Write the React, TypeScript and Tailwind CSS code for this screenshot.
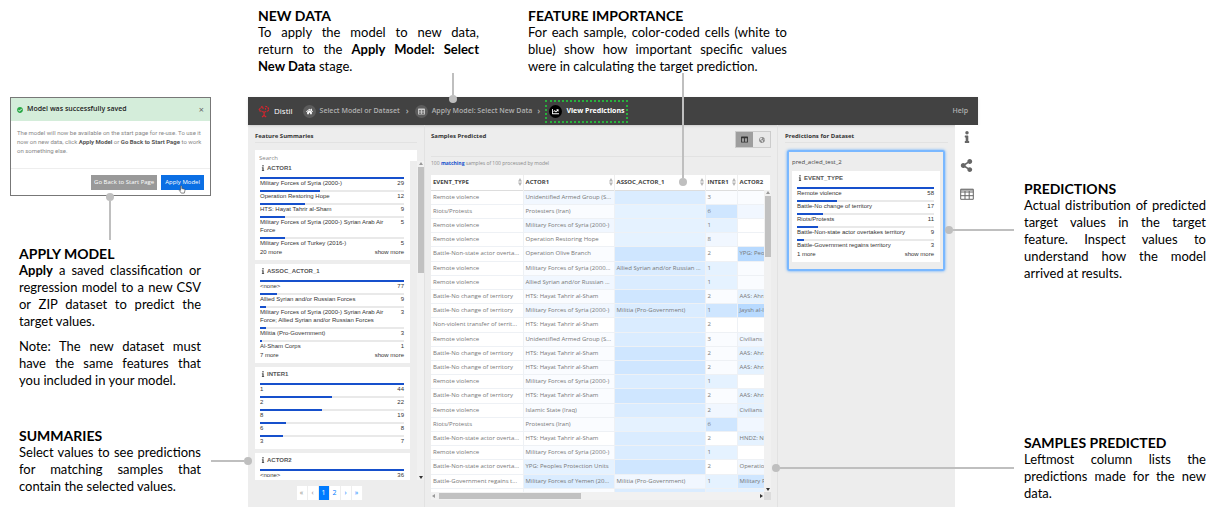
import React from 'react';
import { FaCheckCircle, FaChartLine, FaColumns, FaGlobeAmericas, FaHome, FaInfo, FaShareAlt, FaTable } from 'react-icons/fa';

type Item = [label: string, count: number];

const actor1: Item[] = [
  ['Military Forces of Syria (2000-)', 29],
  ['Operation Restoring Hope', 12],
  ['HTS: Hayat Tahrir al-Sham', 9],
  ['Military Forces of Syria (2000-) Syrian Arab Air Force', 5],
  ['Military Forces of Turkey (2016-)', 5],
];
const assocActor1: Item[] = [
  ['<none>', 77],
  ['Allied Syrian and/or Russian Forces', 9],
  ['Military Forces of Syria (2000-) Syrian Arab Air Force; Allied Syrian and/or Russian Forces', 3],
  ['Militia (Pro-Government)', 3],
  ['Al-Sham Corps', 1],
];
const inter1: Item[] = [['1', 44], ['2', 22], ['8', 19], ['6', 8], ['3', 7]];
const actor2: Item[] = [['<none>', 36]];
const eventType: Item[] = [
  ['Remote violence', 58],
  ['Battle-No change of territory', 17],
  ['Riots/Protests', 11],
  ['Battle-Non-state actor overtakes territory', 9],
  ['Battle-Government regains territory', 3],
];

const W = 'bg-white';
const A = 'bg-[#fafcff]';
const B = 'bg-[#f1f7ff]';
const C = 'bg-[#e5f2ff]';
const D = 'bg-[#daecff]';
const E = 'bg-[#cfe6ff]';
const F = 'bg-[#b8daff]';

type Row = { t: string[]; c: string[] };
const RV = 'Remote violence';
const BN = 'Battle-No change of territory';
const BS = 'Battle-Non-state actor overta...';
const HTS = 'HTS: Hayat Tahrir al-Sham';
const MS = 'Military Forces of Syria (2000-)';
const UAG = 'Unidentified Armed Group (S...';
const rows: Row[] = [
  { t: [RV, UAG, '', '3', ''], c: [B, D, A, A] },
  { t: ['Riots/Protests', 'Protesters (Iran)', '', '6', ''], c: [A, C, E, B] },
  { t: [RV, MS, '', '1', ''], c: [B, C, C, W] },
  { t: [RV, 'Operation Restoring Hope', '', '8', ''], c: [W, C, B, W] },
  { t: [BS, 'Operation Olive Branch', '', '2', 'YPG: Peoples'], c: [A, E, W, F] },
  { t: [RV, 'Military Forces of Syria (2000...', 'Allied Syrian and/or Russian ...', '1', ''], c: [A, D, C, A] },
  { t: [RV, 'Allied Syrian and/or Russian ...', '', '1', ''], c: [B, D, C, A] },
  { t: [BN, HTS, '', '2', 'AAS: Ahrar'], c: [A, E, A, C] },
  { t: [BN, MS, 'Militia (Pro-Government)', '1', 'Jaysh al-Islam'], c: [B, D, E, F] },
  { t: ['Non-violent transfer of territ...', HTS, '', '2', ''], c: [W, D, W, W] },
  { t: [RV, UAG, '', '3', 'Civilians'], c: [A, D, A, B] },
  { t: [BN, HTS, '', '2', 'AAS: Ahrar'], c: [A, E, A, C] },
  { t: [BN, HTS, '', '2', 'AAS: Ahrar'], c: [A, E, A, C] },
  { t: [RV, MS, '', '1', ''], c: [A, D, C, W] },
  { t: [BN, HTS, '', '2', 'AAS: Ahrar'], c: [A, E, A, C] },
  { t: [RV, 'Islamic State (Iraq)', '', '2', 'Civilians'], c: [A, D, B, C] },
  { t: ['Riots/Protests', 'Protesters (Iran)', '', '6', ''], c: [A, C, E, B] },
  { t: [BS, HTS, '', '2', 'HNDZ: National'], c: [W, D, W, C] },
  { t: [RV, MS, '', '1', ''], c: [A, D, C, W] },
  { t: [BS, 'YPG: Peoples Protection Units', '', '2', 'Operation'], c: [C, E, W, B] },
  { t: ['Battle-Government regains t...', 'Military Forces of Yemen (20...', 'Militia (Pro-Government)', '1', 'Military Forces'], c: [D, B, C, E] },
  { t: ['', '', '', '', ''], c: [A, D, C, C] },
];

function Summary({ title, items, more }: { title: string; items: Item[]; more?: string }) {
  const max = items[0][1];
  return (
    <section className="shrink-0 bg-white pr-[6px] pb-1 pl-[5px] font-['Liberation_Sans',sans-serif] text-[6px] leading-[8px] text-[#333]">
      <h3 className="flex h-4 items-center gap-px pb-0.5 font-bold text-[#555]">
        <FaInfo className="size-[6px]" />
        {title}
      </h3>
      <ul className="flex flex-col gap-[3px]">
        {items.map(([label, count]) => (
          <li key={label}>
            <div className="h-0.5 bg-[#e9e9e9]">
              <div className="h-full bg-[#1650cc]" style={{ width: `${(count / max) * 100}%` }} />
            </div>
            <div className="flex justify-between">
              <span className="max-w-[128px]">{label}</span>
              <span>{count}</span>
            </div>
          </li>
        ))}
      </ul>
      {more && (
        <div className="mt-px flex justify-between">
          <span>{more}</span>
          <button type="button">show more</button>
        </div>
      )}
    </section>
  );
}

function Note({ title, children, className = '' }: { title: string; children: React.ReactNode; className?: string }) {
  return (
    <section className={`text-justify font-[Lato,sans-serif] text-[13px] leading-[17px] text-black ${className}`}>
      <h2 className="text-[14px] font-bold">{title}</h2>
      {children}
    </section>
  );
}

function Logo() {
  return (
    <svg viewBox="0 0 12 13" className="h-[13px] w-3 fill-none stroke-[#e0222c]">
      <path d="M4.4 1.2 2.8 2.6M2.4 3.2.8 5M1.2 5.6l2.4.6M4.6 2l.6 1.8M7.4 1.4l1.8.4M9.8 2.2l1 2.2M10.8 5.2 9 6.4M7.4 3.2l.2 1.4M4.2 6.4l1.8.8 2.2-.8M6.1 7.4v2.8M4 12l2-1.6L8.2 12" strokeWidth="1.1" />
    </svg>
  );
}

function Arrow({ d }: { d: 'up' | 'down' | 'left' | 'right' }) {
  const paths = { up: 'M3 1 5 4H1z', down: 'M3 5 5 2H1z', left: 'M1 3 4 1v4z', right: 'M5 3 2 1v4z' };
  return (
    <svg viewBox="0 0 6 6" className={`size-[6px] shrink-0 ${d === 'up' || d === 'left' ? 'fill-[#999]' : 'fill-[#333]'}`}>
      <path d={paths[d]} />
    </svg>
  );
}

function SortIcon() {
  return (
    <svg viewBox="0 0 6 8" className="h-2 w-[6px] shrink-0 fill-[#b5b5b5]">
      <path d="M3 0 5 3.4H1zM3 8 1 4.6h4z" />
    </svg>
  );
}

function Dialog() {
  return (
    <div role="dialog" aria-labelledby="saved" className="relative mx-[10px] mt-[97px] w-[201px] border border-[#777] bg-white font-['Open_Sans',sans-serif] text-[6px]">
      <div className="flex h-[23px] items-center bg-[#d4edda] px-[6px] text-[#222]">
        <FaCheckCircle className="size-[6px] text-[#28a745]" />
        <h2 id="saved" className="ml-1 flex-1 text-[7px] font-semibold">Model was successfully saved</h2>
        <button type="button" aria-label="Close" className="text-[9px] text-[#666]">×</button>
      </div>
      <p className="h-[47px] px-[6px] pt-[7px] font-[Roboto,sans-serif] leading-[9px] text-[#888]">
        The model will now be available on the start page for re-use. To use it now on new data, click <b className="font-bold text-[#555]">Apply Model</b> or <b className="font-bold text-[#555]">Go Back to Start Page</b> to work on something else.
      </p>
      <div className="flex h-[27px] items-center justify-end gap-1 border-t border-[#eee] px-[6px] text-white">
        <button type="button" className="h-[15px] bg-[#999] px-[3px]">Go Back to Start Page</button>
        <button type="button" className="h-[15px] bg-[#0b6fe4] px-1">Apply Model</button>
      </div>
      <svg viewBox="0 0 8 10" className="absolute right-6 bottom-px h-[9px] w-2 fill-white stroke-[#444]" strokeWidth=".7">
        <path d="M2.5 5V1.2Q3.2.3 3.8 1.2V4L6.8 4.6Q7.5 5 7.2 6.5L6.5 9H3.2L1 6Q1 5 2.5 6Z" />
      </svg>
      <div className="absolute top-[95px] left-[95px] flex flex-col items-center">
        <i className="size-2 rounded-full bg-[#bfbfbf]" />
        <i className="h-[39px] w-0.5 bg-[#bfbfbf]" />
      </div>
    </div>
  );
}

function Header() {
  return (
    <header className="flex h-7 items-center bg-[#424242] px-[10px] text-[7px] font-semibold text-[#b0b0b0] shadow-sm">
      <Logo />
      <h1 className="ml-1 text-[8px] font-normal text-white">Distil</h1>
      <nav className="ml-[10px] flex flex-1 items-center">
        <a href="#start" className="flex items-center gap-1">
          <span className="flex size-[13px] items-center justify-center rounded-full bg-[#5c5c5c] text-white"><FaHome className="size-[7px]" /></span>
          Select Model or Dataset
        </a>
        <span className="mx-[6px] text-[9px]">›</span>
        <a href="#data" className="flex items-center gap-1">
          <span className="flex size-[13px] items-center justify-center rounded-full bg-[#5c5c5c] text-[#ccc]"><FaTable className="size-[7px]" /></span>
          Apply Model: Select New Data
        </a>
        <span className="mx-[5px] text-[9px]">›</span>
        <a href="#predictions" className="flex h-[23px] items-center gap-1 border-2 border-dotted border-[#28b23c] px-0.5 font-bold text-white">
          <span className="flex size-[13px] items-center justify-center rounded-full bg-black"><FaChartLine className="size-[7px]" /></span>
          View Predictions
        </a>
      </nav>
      <a href="#help">Help</a>
    </header>
  );
}

function FeatureColumn() {
  return (
    <section className="flex w-[177px] flex-col border-r border-[#e2e2e2] pl-[7px]">
      <h2 className="mr-[7px] h-[18px] border-b border-[#e2e2e2] pt-[6px] font-bold text-[#333]">Feature Summaries</h2>
      <input aria-label="Search features" placeholder="Search" className="mt-[7px] mr-[7px] h-[11px] bg-white px-1 pt-1 text-[6px] placeholder:text-[#888]" />
      <div className="flex h-[319px]">
        <div className="flex flex-1 flex-col gap-1 overflow-hidden">
          <Summary title="ACTOR1" items={actor1} more="20 more" />
          <Summary title="ASSOC_ACTOR_1" items={assocActor1} more="7 more" />
          <Summary title="INTER1" items={inter1} />
          <Summary title="ACTOR2" items={actor2} />
        </div>
        <div className="ml-[7px] flex w-[7px] flex-col items-center justify-between bg-[#f1f1f1]">
          <Arrow d="up" />
          <div className="mb-auto h-[106px] w-[6px] bg-[#c1c1c1]" />
          <Arrow d="down" />
        </div>
      </div>
      <nav aria-label="Pages" className="mt-[6px] mr-[20px] flex justify-center text-[7px]">
        {['«', '‹', '1', '2', '›', '»'].map((p, i) => (
          <button
            key={p}
            type="button"
            className={`h-[14px] w-[11px] border-r border-[#eee] ${p === '1' ? 'bg-[#007bff] text-white' : i < 2 ? 'bg-white text-[#888]' : 'bg-white text-[#007bff]'}`}
          >
            {p}
          </button>
        ))}
      </nav>
    </section>
  );
}

function Samples() {
  const heads = ['EVENT_TYPE', 'ACTOR1', 'ASSOC_ACTOR_1', 'INTER1', 'ACTOR2'];
  return (
    <section className="flex min-w-0 flex-1 flex-col border-r border-[#e2e2e2] px-[6px]">
      <div className="flex h-8 items-start justify-between border-b border-[#e2e2e2] pt-[6px]">
        <h2 className="font-bold text-[#333]">Samples Predicted</h2>
        <div className="flex border border-[#ccc]">
          <button type="button" aria-label="Table view" className="flex h-[15px] w-[17px] items-center justify-center bg-[#9e9e9e] text-[#333]"><FaColumns className="size-[7px]" /></button>
          <button type="button" aria-label="Map view" className="flex h-[15px] w-[17px] items-center justify-center bg-[#e8e8e8] text-[#888]"><FaGlobeAmericas className="size-[6px]" /></button>
        </div>
      </div>
      <p className="h-[18px] text-[5px] leading-[12px] text-[#888]">
        100 <b className="text-[#1650cc]">matching</b> samples of 100 processed by model
      </p>
      <div className="relative h-[317px] overflow-hidden bg-white">
        <table className="h-[328px] w-full table-fixed border-collapse text-left leading-[9px] text-[#777]">
          <colgroup>
            <col className="w-[92px]" />
            <col className="w-[91px]" />
            <col className="w-[91px]" />
            <col className="w-8" />
            <col />
          </colgroup>
          <thead>
            <tr className="h-[15px] border-b border-[#ddd] text-[#444]">
              {heads.map((h, i) => (
                <th key={h} scope="col" className="overflow-hidden border-r border-[#eee] pl-0.5 font-bold">
                  <div className="flex items-center justify-between">
                    {h}
                    {i < 4 && <SortIcon />}
                  </div>
                </th>
              ))}
            </tr>
          </thead>
          <tbody>
            {rows.map((r, i) => (
              <tr key={i} className="h-[14px] border-b border-[#eef1f5]">
                {r.t.map((t, j) => (
                  <td key={j} className={`overflow-hidden border-r border-[#eef1f5] py-0 pr-0 pl-0.5 whitespace-nowrap ${j ? r.c[j - 1] : W}`}>{t}</td>
                ))}
              </tr>
            ))}
          </tbody>
        </table>
        <div className="absolute top-[15px] right-0 bottom-0 flex w-[7px] flex-col items-center bg-[#f1f1f1]">
          <Arrow d="up" />
          <div className="mb-auto h-[61px] w-[6px] bg-[#c1c1c1]" />
          <Arrow d="down" />
        </div>
      </div>
      <div className="flex h-2 items-center bg-[#f1f1f1]">
        <Arrow d="left" />
        <div className="mr-auto ml-[2px] h-[6px] w-[142px] bg-[#c1c1c1]" />
        <Arrow d="right" />
        <div className="h-full w-[7px] bg-[#dcdcdc]" />
      </div>
    </section>
  );
}

function Predictions() {
  return (
    <section className="w-[177px] px-[7px]">
      <h2 className="h-[18px] border-b border-[#e2e2e2] pt-[6px] font-bold text-[#333]">Predictions for Dataset</h2>
      <div className="mt-[7px] mr-[3px] ml-[2px] h-[121px] rounded-xs border-2 border-[#7ab8ff] px-[3px] shadow-[0_0_3px_#5aa8ff]">
        <h3 className="h-[19px] pt-[5px] text-[#444]">pred_acled_test_2</h3>
        <Summary title="EVENT_TYPE" items={eventType} more="1 more" />
      </div>
    </section>
  );
}

export default function App() {
  return (
    <main className="flex min-h-screen bg-white">
      <aside className="w-[248px] shrink-0">
        <Dialog />
        <Note title="APPLY MODEL" className="mt-[49px] mr-[47px] ml-[19px]">
          <p><b>Apply</b> a saved classification or regression model to a new CSV or ZIP dataset to predict the target values.</p>
          <p className="mt-2">Note: The new dataset must have the same features that you included in your model.</p>
        </Note>
        <div className="relative mt-[38px]">
          <Note title="SUMMARIES" className="mr-[47px] ml-[19px]">
            <p>Select values to see predictions for matching samples that contain the selected values.</p>
          </Note>
          <div className="absolute top-[30px] -right-1 z-10 flex items-center">
            <i className="h-0.5 w-[33px] bg-[#bfbfbf]" />
            <i className="size-2 rounded-full bg-[#bfbfbf]" />
          </div>
        </div>
      </aside>

      <div className="relative min-w-0 flex-1">
        <div className="flex h-[97px] gap-[49px] pt-[7px] pl-[10px]">
          <Note title="NEW DATA" className="w-[221px]">
            <p>To apply the model to new data, return&nbsp;to the <b>Apply Model: Select New&nbsp;Data</b>&nbsp;stage.</p>
          </Note>
          <Note title="FEATURE IMPORTANCE" className="w-[259px]">
            <p>For each sample, color-coded cells (white to blue) show how important specific values were in calculating the target prediction.</p>
          </Note>
        </div>
        <div className="h-[410px] bg-[#ededed] font-['Open_Sans',sans-serif] text-[6px] leading-[10px]">
          <Header />
          <div className="flex h-[382px]">
            <FeatureColumn />
            <Samples />
            <Predictions />
            <div className="flex w-[23px] flex-col items-center gap-4 bg-white pt-[6px] text-[#666]">
              <button type="button" aria-label="Details"><FaInfo className="size-3" /></button>
              <button type="button" aria-label="Share"><FaShareAlt className="size-[13px]" /></button>
              <button type="button" aria-label="Table">
                <svg viewBox="0 0 14 12" className="h-3 w-[14px] fill-none stroke-current">
                  <path d="M.7 1.2h12.6v10.1H.7zM.7 4h12.6M.7 7.7h12.6M5 3v8M9.2 3v8M1 2h12" />
                </svg>
              </button>
            </div>
          </div>
        </div>
        <div className="absolute top-[73px] left-[201px] flex flex-col items-center">
          <i className="h-[22px] w-0.5 bg-[#bfbfbf]" />
          <i className="size-2 rounded-full bg-[#bfbfbf]" />
        </div>
        <div className="absolute top-[73px] left-[431px] flex flex-col items-center">
          <i className="h-[105px] w-0.5 bg-[#bfbfbf]" />
          <i className="size-2 rounded-full bg-[#bfbfbf]" />
        </div>
        <div className="absolute top-[226px] -right-9 flex items-center">
          <i className="size-2 rounded-full bg-[#bfbfbf]" />
          <i className="h-0.5 w-[61px] bg-[#bfbfbf]" />
        </div>
        <div className="absolute top-[464px] -right-9 flex items-center">
          <i className="size-2 rounded-full bg-[#bfbfbf]" />
          <i className="h-0.5 w-[234px] bg-[#bfbfbf]" />
        </div>
      </div>

      <aside className="w-[239px] shrink-0 pt-[180px] pr-[11px] pl-[46px]">
        <Note title="PREDICTIONS">
          <p>Actual distribution of predicted target values in the target feature. Inspect values to understand how the model arrived at results.</p>
        </Note>
        <Note title="SAMPLES PREDICTED" className="mt-[152px]">
          <p>Leftmost column lists the predictions made for the new data.</p>
        </Note>
      </aside>
    </main>
  );
}
